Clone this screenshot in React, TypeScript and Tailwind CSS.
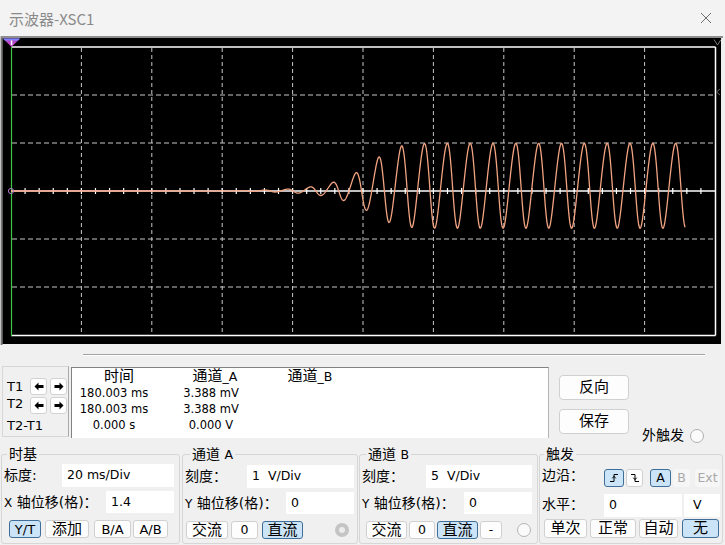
import React from "react";

function buildWave(): string {
  const pts: string[] = [];
  const P = 22.83;
  const x0 = 401.7;
  for (let x = 11; x <= 685; x += 0.5) {
    const a0 = 2 * Math.pow(2, (x - 292) / 21);
    const A = Math.pow(Math.pow(a0, -3) + Math.pow(42.5, -3), -1 / 3);
    const c = 191 - 5.25 * (A / 42.5);
    const phi = (2 * Math.PI * (x - x0)) / P;
    const th = phi + 0.19 * (1 - Math.cos(phi));
    const y = c - A * Math.cos(th);
    pts.push(`${x.toFixed(1)},${y.toFixed(2)}`);
  }
  return pts.join(" ");
}

const WAVE = buildWave();
const VERTS = Array.from({ length: 9 }, (_, i) => 11 + 70.4 * (i + 1));
const HORIZ = [95, 143, 239, 287];
const TICKS = Array.from({ length: 49 }, (_, i) => 11 + 14.08 * (i + 1));

function Scope() {
  return (
    <svg width="725" height="309" viewBox="0 36 725 309" className="block">
      <rect x="0" y="36" width="723" height="2" fill="#8e8e8e" />
      <rect x="0" y="36" width="1" height="309" fill="#c4c4c4" />
      <rect x="1" y="38" width="1.5" height="307" fill="#727272" />
      <rect x="2.5" y="38" width="718.5" height="306" fill="#000" />
      {VERTS.map((x) => (
        <line key={"v" + x} x1={x} y1={48} x2={x} y2={335} stroke="#c8c8c8" strokeWidth="1" strokeDasharray="4 3" />
      ))}
      {HORIZ.map((y) => (
        <line key={"h" + y} x1={12} y1={y} x2={715} y2={y} stroke="#c8c8c8" strokeWidth="1" strokeDasharray="5 3" />
      ))}
      <line x1={11} y1={47} x2={715.5} y2={47} stroke="#fff" strokeWidth="1.5" />
      <line x1={715.5} y1={47} x2={715.5} y2={335.5} stroke="#fff" strokeWidth="1.5" />
      <line x1={11} y1={335.5} x2={715.5} y2={335.5} stroke="#fff" strokeWidth="1.5" />
      <line x1={11.5} y1={47} x2={11.5} y2={336} stroke="#3fc43f" strokeWidth="1.2" />
      <line x1={11} y1={191} x2={715} y2={191} stroke="#fff" strokeWidth="1.5" />
      {TICKS.map((x) => (
        <line key={"t" + x} x1={x} y1={188} x2={x} y2={194} stroke="#fff" strokeWidth="1.2" />
      ))}
      <polyline points={WAVE} fill="none" stroke="#f2a482" strokeWidth="1.3" strokeLinejoin="round" />
      <circle cx={11} cy={191} r={2.6} fill="none" stroke="#b07cc8" strokeWidth="1" />
      <polygon points="3,38.5 20,38.5 11.5,47" fill="#b848c8" />
      <polygon points="3,38.5 20,38.5 18.2,40.5 4.8,40.5" fill="#7a86ff" />
      <rect x="10.8" y="40.5" width="1.5" height="4.5" fill="#fff" />
      <polyline points="714,39.5 717.5,45 721,39.5" fill="none" stroke="#7a7a7a" strokeWidth="1" />
      <polyline points="720,89 716.5,92 720,95" fill="none" stroke="#6a6a6a" strokeWidth="1" />
    </svg>
  );
}

function ArrowBtn({ dir }: { dir: "l" | "r" }) {
  return (
    <div className="w-[17px] h-[17px] bg-white border border-[#d2d2d2] rounded-[3px] flex items-center justify-center">
      <svg width="10" height="9" viewBox="0 0 10 9">
        {dir === "l" ? (
          <path d="M0.5 4.5 L4.5 0.5 L4.5 3 L9.5 3 L9.5 6 L4.5 6 L4.5 8.5 Z" fill="#000" />
        ) : (
          <path d="M9.5 4.5 L5.5 0.5 L5.5 3 L0.5 3 L0.5 6 L5.5 6 L5.5 8.5 Z" fill="#000" />
        )}
      </svg>
    </div>
  );
}

function Btn({ className, active, disabled, children }: { className: string; active?: boolean; disabled?: boolean; children: React.ReactNode }) {
  const look = active
    ? "bg-[#cce4f7] border-[#3f6f98]"
    : disabled
    ? "bg-[#f6f6f6] border-[#f6f6f6] text-[#a9a9a9]"
    : "bg-[#fdfdfd] border-[#d0d0d0]";
  return (
    <div className={"shrink-0 flex items-center justify-center rounded-[3px] border leading-none " + look + " " + className}>
      {children}
    </div>
  );
}

function Field({ className, children }: { className: string; children: React.ReactNode }) {
  return <div className={"shrink-0 bg-white flex items-center pl-[5px] text-[12.5px] " + className}>{children}</div>;
}

export default function App() {
  return (
    <div className="w-[725px] h-[545px] overflow-hidden bg-[#f0f0f0] text-black font-['DejaVu_Sans','Noto_Sans_CJK_SC',sans-serif]">
      <div className="h-[36px] bg-[#f3f3f3] flex items-center justify-between pl-[9px] pr-[13px]">
        <span className="font-['Noto_Sans_CJK_SC',sans-serif] text-[15px] leading-none text-[#8a8a8a]">示波器-XSC1</span>
        <svg width="12" height="12" viewBox="0 0 12 12">
          <path d="M1 1 L11 11 M11 1 L1 11" stroke="#6e6e6e" strokeWidth="1" />
        </svg>
      </div>

      <Scope />

      <div className="h-[21px] pt-[9px]">
        <div className="ml-[83px] w-[622px] h-[2px] border-t border-[#a3a3a3] border-b border-b-[#ffffff]" />
      </div>

      <div className="flex h-[72px]">
        <div className="ml-[2px] w-[67px] h-[71px] border border-[#d6d6d6] border-r-[#a8a8a8] pt-[11px] text-[13px]">
          <div className="flex items-center h-[17px]">
            <span className="w-[27px] pl-[4px]">T1</span>
            <ArrowBtn dir="l" />
            <div className="w-[3px]" />
            <ArrowBtn dir="r" />
          </div>
          <div className="flex items-center h-[17px] mt-[2px]">
            <span className="w-[27px] pl-[4px] -mt-[4px]">T2</span>
            <ArrowBtn dir="l" />
            <div className="w-[3px]" />
            <ArrowBtn dir="r" />
          </div>
          <div className="mt-[4px] pl-[4px] leading-[16px]">T2-T1</div>
        </div>

        <div className="ml-[2px] mt-[1px] w-[478px] h-[71px] bg-white border-t border-l border-[#828282] border-r border-r-[#b4b4b4]">
          <div className="grid grid-cols-[84px_110px_88px] text-[11.5px] leading-[16px]">
            <div className="text-center pl-[10px] text-[15px]">时间</div>
            <div className="text-center pl-[8px] text-[15px]">通道<span className="text-[12.5px]">_A</span></div>
            <div className="text-center text-[15px]">通道<span className="text-[12.5px]">_B</span></div>
            <div className="text-center">180.003 ms</div>
            <div className="text-center">3.388 mV</div>
            <div />
            <div className="text-center">180.003 ms</div>
            <div className="text-center">3.388 mV</div>
            <div />
            <div className="text-center">0.000 s</div>
            <div className="text-center">0.000 V</div>
            <div />
          </div>
        </div>

        <div className="ml-[10px] w-[70px] pt-[9px]">
          <Btn className="w-[70px] h-[25px] rounded-[4px] text-[15px]">反向</Btn>
          <Btn className="w-[70px] h-[25px] mt-[9px] rounded-[4px] text-[15px]">保存</Btn>
        </div>

        <div className="ml-[13px] pt-[59px] flex items-start">
          <span className="text-[14px] leading-[20px]">外触发</span>
          <div className="ml-[6px] mt-[4px] w-[14px] h-[14px] rounded-full border border-[#b0b0b0] bg-[#fafafa]" />
        </div>
      </div>

      <div className="flex mt-[6px]">
        {/* 时基 */}
        <fieldset className="ml-[1px] w-[179px] h-[100px] shrink-0 border border-[#d6d6d6] rounded-[3px] px-[2px]">
          <legend className="ml-[3px] px-[2px] text-[14px] leading-[20px]">时基</legend>
          <div className="flex items-center h-[23px]">
            <span className="w-[58px] text-[14px]">标度:</span>
            <Field className="w-[112px] h-[23px]">20 ms/Div</Field>
          </div>
          <div className="flex items-center h-[22px] mt-[4px]">
            <span className="w-[102px] text-[14px]"><span className="text-[12px]">X</span> 轴位移(格)：</span>
            <Field className="w-[68px] h-[22px]">1.4</Field>
          </div>
          <div className="flex h-[18px] mt-[7px]">
            <Btn active className="ml-[5px] w-[32px] h-[18px] text-[13px]">Y/T</Btn>
            <Btn className="ml-[4px] w-[44px] h-[18px] text-[15px]">添加</Btn>
            <Btn className="ml-[5px] w-[37px] h-[18px] text-[13px]">B/A</Btn>
            <Btn className="ml-[2px] w-[35px] h-[18px] text-[13px]">A/B</Btn>
          </div>
        </fieldset>

        {/* 通道 A */}
        <fieldset className="ml-[2px] w-[176px] h-[100px] shrink-0 border border-[#d6d6d6] rounded-[3px] px-[2px]">
          <legend className="ml-[5px] px-[2px] text-[14px] leading-[20px]">通道 <span className="text-[12.5px]">A</span></legend>
          <div className="flex items-center h-[23px]">
            <span className="w-[62px] text-[14px]">刻度：</span>
            <Field className="w-[107px] h-[23px]">1&nbsp;&nbsp;V/Div</Field>
          </div>
          <div className="flex items-center h-[22px] mt-[4px]">
            <span className="w-[101px] text-[14px]"><span className="text-[12px]">Y</span> 轴位移(格)：</span>
            <Field className="w-[68px] h-[22px]">0</Field>
          </div>
          <div className="flex items-center h-[18px] mt-[7px]">
            <Btn className="ml-[1px] w-[42px] h-[18px] text-[15px]">交流</Btn>
            <Btn className="ml-[3px] w-[27px] h-[18px] text-[12.5px]">0</Btn>
            <Btn active className="ml-[4px] w-[41px] h-[18px] text-[15px]">直流</Btn>
            <div className="ml-[32px] w-[14px] h-[14px] rounded-full bg-[#c4c4c4] flex items-center justify-center">
              <div className="w-[6px] h-[6px] rounded-full bg-[#ececec]" />
            </div>
          </div>
        </fieldset>

        {/* 通道 B */}
        <fieldset className="ml-[1px] w-[179px] h-[100px] shrink-0 border border-[#d6d6d6] rounded-[3px] px-[2px]">
          <legend className="ml-[4px] px-[2px] text-[14px] leading-[20px]">通道 <span className="text-[12.5px]">B</span></legend>
          <div className="flex items-center h-[23px]">
            <span className="w-[64px] text-[14px]">刻度：</span>
            <Field className="w-[106px] h-[23px]">5&nbsp;&nbsp;V/Div</Field>
          </div>
          <div className="flex items-center h-[22px] mt-[4px]">
            <span className="w-[102px] text-[14px]"><span className="text-[12px]">Y</span> 轴位移(格)：</span>
            <Field className="w-[68px] h-[22px]">0</Field>
          </div>
          <div className="flex items-center h-[18px] mt-[7px]">
            <Btn className="ml-[4px] w-[41px] h-[18px] text-[15px]">交流</Btn>
            <Btn className="ml-[2px] w-[26px] h-[18px] text-[12.5px]">0</Btn>
            <Btn active className="ml-[2px] w-[41px] h-[18px] text-[15px]">直流</Btn>
            <Btn className="ml-[2px] w-[22px] h-[18px] text-[12.5px]">-</Btn>
            <div className="ml-[15px] w-[14px] h-[14px] rounded-full border border-[#b4b4b4] bg-[#fafafa]" />
          </div>
        </fieldset>

        {/* 触发 */}
        <fieldset className="ml-[1px] w-[184px] h-[100px] shrink-0 border border-[#d6d6d6] rounded-[3px] px-[2px]">
          <legend className="ml-[2px] px-[2px] text-[14px] leading-[20px]">触发</legend>
          <div className="flex h-[23px]">
            <span className="w-[62px] text-[14px] self-center">边沿：</span>
            <Btn active className="self-end w-[20px] h-[18px]">
              <svg width="10" height="10" viewBox="0 0 10 10">
                <path d="M1 8.5 H5 V1.5 H9" fill="none" stroke="#000" strokeWidth="1" />
                <path d="M3.3 5.3 L5 3.3 L6.7 5.3" fill="none" stroke="#000" strokeWidth="1" />
              </svg>
            </Btn>
            <Btn className="self-end ml-[2px] w-[17px] h-[18px]">
              <svg width="10" height="10" viewBox="0 0 10 10">
                <path d="M1 1.5 H5 V8.5 H9" fill="none" stroke="#000" strokeWidth="1" />
                <path d="M3.3 4.7 L5 6.7 L6.7 4.7" fill="none" stroke="#000" strokeWidth="1" />
              </svg>
            </Btn>
            <Btn active className="self-end ml-[7px] w-[21px] h-[18px] text-[12.5px]">A</Btn>
            <Btn disabled className="self-end ml-[2px] w-[17px] h-[18px] text-[12.5px]">B</Btn>
            <Btn disabled className="self-end ml-[5px] w-[25px] h-[18px] text-[12.5px]">Ext</Btn>
          </div>
          <div className="flex items-center h-[23px] mt-[7px]">
            <span className="w-[62px] text-[14px] -mt-[3px]">水平：</span>
            <Field className="w-[78px] h-[23px]">0</Field>
            <Field className="ml-[2px] w-[36px] h-[23px] pl-[9px]">V</Field>
          </div>
          <div className="flex h-[19px] mt-[2px]">
            <Btn className="ml-[2px] w-[43px] h-[19px] text-[15px]">单次</Btn>
            <Btn className="ml-[3px] w-[46px] h-[19px] text-[15px]">正常</Btn>
            <Btn className="ml-[3px] w-[39px] h-[19px] text-[15px]">自动</Btn>
            <Btn active className="ml-[4px] w-[37px] h-[19px] text-[15px]">无</Btn>
          </div>
        </fieldset>
      </div>
    </div>
  );
}
